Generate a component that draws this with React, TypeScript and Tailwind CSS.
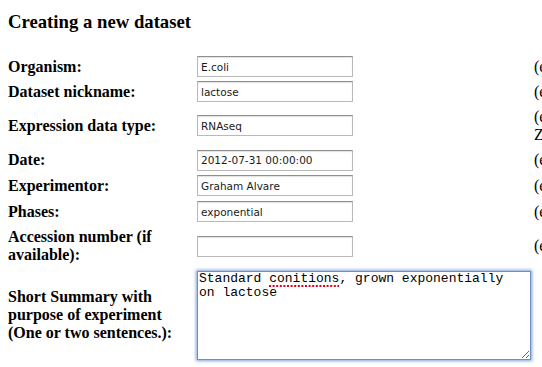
import React from "react";

const serif = { fontFamily: '"Liberation Serif", "Times New Roman", serif' };

function Field({ value }: { value: string }) {
  return (
    <input
      readOnly
      value={value}
      className="box-border h-[21px] w-[156px] border border-[#b9b9b9] border-t-[#8f8f8f] bg-white px-[3px] text-[10.5px] text-[#1a1a1a] shadow-[inset_0_1px_1px_rgba(0,0,0,0.12)] outline-none"
      style={{ fontFamily: '"DejaVu Sans", "Lucida Grande", sans-serif' }}
    />
  );
}

export default function App() {
  const rows: { label: string; value: string; hint: React.ReactNode }[] = [
    { label: "Organism:", value: "E.coli", hint: "(e.g. E. coli K-12)" },
    { label: "Dataset nickname:", value: "lactose", hint: "(e.g. lactose growth)" },
    {
      label: "Expression data type:",
      value: "RNAseq",
      hint: (
        <>
          (e.g. RNAseq, Microarray)
          <br />
          Z-scores are not accepted
        </>
      ),
    },
    { label: "Date:", value: "2012-07-31 00:00:00", hint: "(e.g. 2012-07-31)" },
    { label: "Experimentor:", value: "Graham Alvare", hint: "(e.g. John Smith)" },
    { label: "Phases:", value: "exponential", hint: "(e.g. stationary)" },
    { label: "Accession number (if available):", value: "", hint: "(e.g. GSE12345)" },
  ];

  return (
    <div
      className="h-[367px] w-[542px] overflow-hidden bg-white text-black"
      style={serif}
    >
      <div className="px-[8px] pt-[11px]">
        <h3 className="text-[18.72px] font-bold leading-[21px]">Creating a new dataset</h3>
        <div className="mt-[22px] grid grid-cols-[189px_337px_200px] grid-rows-[25px_25px_43px_26px_25px_27px_42px_96px]">
          {rows.map((r, i) => (
            <React.Fragment key={i}>
              <div className="flex items-center pr-[4px] text-[16px] font-bold leading-[18px]">
                {r.label}
              </div>
              <div className="flex items-center">
                <Field value={r.value} />
              </div>
              <div className="flex items-center whitespace-nowrap text-[16px] leading-[18px]">
                <div>{r.hint}</div>
              </div>
            </React.Fragment>
          ))}
          <div className="flex items-center pr-[4px] text-[16px] font-bold leading-[18px]">
            Short Summary with purpose of experiment (One or two sentences.):
          </div>
          <div className="flex items-center">
            <div className="relative">
              <textarea
                readOnly
                spellCheck={false}
                value={"Standard conitions, grown exponentially on lactose"}
                className="box-border block h-[89px] w-[334px] resize border border-[#6a90c8] bg-white pl-[1px] pr-[16px] py-0 text-[13px] leading-[14.7px] text-black shadow-[0_0_3px_1px_rgba(100,145,210,0.85)] outline-none"
                style={{ fontFamily: '"Liberation Mono", "Courier New", monospace' }}
              />
              <svg
                className="pointer-events-none absolute left-[72px] top-[14px]"
                width="70"
                height="2"
              >
                <line
                  x1="0"
                  y1="1"
                  x2="70"
                  y2="1"
                  stroke="#e0001b"
                  strokeWidth="2"
                  strokeDasharray="2 1.6"
                />
              </svg>
            </div>
          </div>
          <div />
        </div>
      </div>
    </div>
  );
}
